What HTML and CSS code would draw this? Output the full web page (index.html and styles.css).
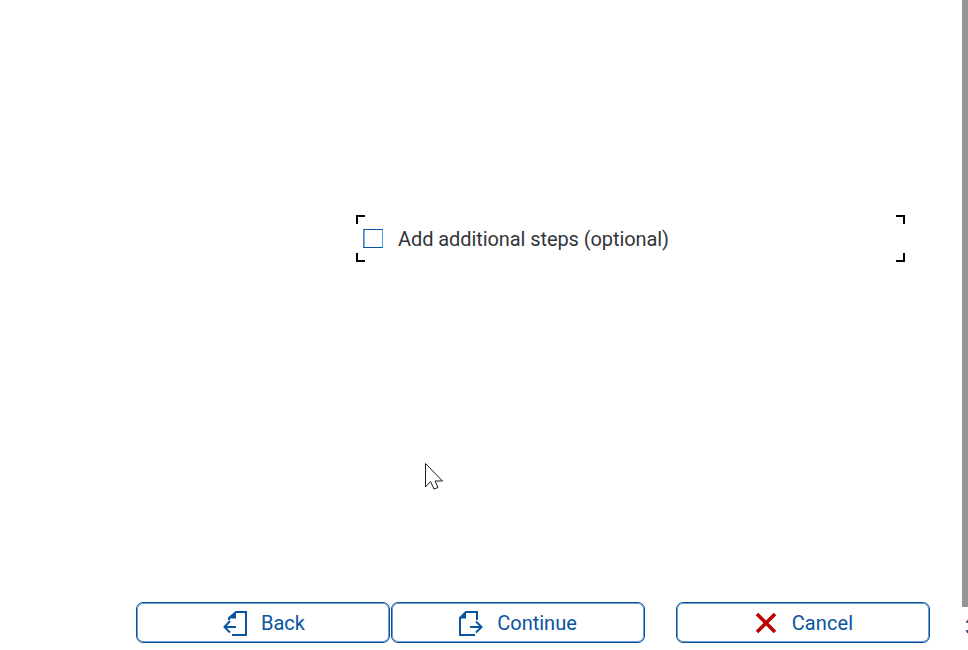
FILE: index.html
```html
<!DOCTYPE html>
<html lang="en">
<head>
<meta charset="utf-8">
<title>Add additional steps</title>
<link rel="stylesheet" href="styles.css">
</head>
<body>
<div class="page">
  <main class="content">
    <label class="option">
      <span class="corner top-left"></span>
      <span class="corner top-right"></span>
      <span class="corner bottom-left"></span>
      <span class="corner bottom-right"></span>
      <span class="checkbox"></span>
      <span class="option-text">Add additional steps (optional)</span>
    </label>
    <footer class="actions">
      <button class="button back-button">
        <svg class="icon" viewBox="0 0 24 26" fill="none" stroke="currentColor" stroke-width="2"><path d="M6 10V8L13 2H23V25H9M1 17H13M7 11L1.5 17L7 22.5"/><path d="M7 8.5L13 2V8.5Z" fill="currentColor" stroke="none"/></svg>
        <span class="label">Back</span>
      </button>
      <button class="button">
        <svg class="icon" viewBox="0 0 24 26" fill="none" stroke="currentColor" stroke-width="2"><path d="M18 10V2H7L1 8V25H16M11 17H23M17 11.5L22.5 17L17 22.5"/><path d="M1 8.5L7 2V8.5Z" fill="currentColor" stroke="none"/></svg>
        <span class="label">Continue</span>
      </button>
      <button class="button cancel-button">
        <svg class="icon cancel-icon" viewBox="0 0 22 22" fill="none" stroke="currentColor" stroke-width="3.6"><path d="M2 2L20 20M20 2L2 20"/></svg>
        <span class="label">Cancel</span>
      </button>
    </footer>
  </main>
  <aside class="side"><div class="scrollbar"></div><span class="count">3</span></aside>
</div>
<svg class="pointer" viewBox="0 0 19 28"><path d="M1.5 1.5V25L6.5 19.5L10 27L14 25.5L11 19H18.5Z" fill="#fff" stroke="#1b1b2b"/></svg>
</body>
</html>
```
FILE: styles.css
```css
* { box-sizing: border-box; }
body { margin: 0; background: #fff; font-family: Roboto, "Noto Sans", sans-serif; font-size: 20px; }
.page { display: flex; width: 968px; height: 650px; overflow: hidden; }
.content { display: flex; flex-direction: column; justify-content: space-between; width: 962px; padding: 215px 32px 7px 136px; }
.option { position: relative; display: flex; align-items: center; width: 549px; height: 47px; margin-left: 220px; padding-left: 7px; color: #32363a; }
.checkbox { width: 20px; height: 19px; border: 1px solid #0854a0; border-left-color: #5b7fb0; border-right-color: #3ba3ed; box-shadow: inset 1px 0 0 #5bb8f5; }
.option-text { margin-left: 15px; line-height: 24px; white-space: nowrap; letter-spacing: -0.08px; }
.corner { position: absolute; width: 9px; height: 9px; border: 0 solid #000; }
.top-left { top: 0; left: 0; border-width: 2px 0 0 2px; }
.top-right { top: 0; right: 0; border-width: 2px 2px 0 0; }
.bottom-left { bottom: 0; left: 0; border-width: 0 0 2px 2px; }
.bottom-right { bottom: 0; right: 0; border-width: 0 2px 2px 0; }
.actions { display: flex; gap: 1px; }
.button { display: flex; align-items: center; justify-content: center; gap: 14px; width: 254px; height: 41px; padding: 0; border: 1px solid #0854a0; border-radius: 7px; background: #fff; box-shadow: inset 0 0 0 1px #6f9cc9; color: #0854a0; font: inherit; }
.back-button { padding-left: 2px; }
.cancel-button { gap: 15px; margin-left: 30px; padding-left: 2px; letter-spacing: 0.1px; }
.icon { width: 24px; height: 26px; }
.cancel-icon { width: 22px; height: 22px; color: #b00; }
.label { line-height: 24px; white-space: nowrap; }
.side { width: 6px; overflow: hidden; }
.scrollbar { height: 607px; background: #949494; }
.count { display: block; margin: 8px 0 0 3px; line-height: 24px; color: #354a7d; }
.pointer { position: absolute; left: 424px; top: 462px; width: 19px; height: 28px; }
```
